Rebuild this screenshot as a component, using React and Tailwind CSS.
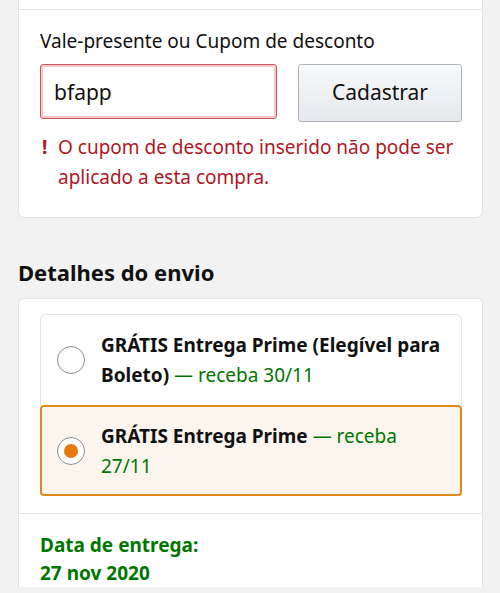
export default function App() {
  return (
    <div
      className="h-[593px] overflow-hidden bg-[#f2f2f2] pl-[18px] pr-[17px] text-[#111]"
      style={{ fontFamily: '"Noto Sans", "Open Sans", sans-serif' }}
    >
      {/* cupom card */}
      <div className="rounded-b-[6px] border-x border-b border-[#e3e3e3] bg-white">
        <div className="h-[10px] border-b border-[#e7e7e7]" />
        <div className="pb-[25px] pl-[21px] pr-[20px] pt-[16px]">
          <div className="text-[19px] leading-[30px]">Vale-presente ou Cupom de desconto</div>
          <div className="mt-[8px] flex items-start">
            <div className="flex h-[55px] w-[237px] items-center rounded-[3px] border border-[#c45a5a] bg-white px-[13px] pt-[3px] shadow-[0_0_0_2px_#f8c8c8_inset]">
              <span className="text-[21px]">bfapp</span>
            </div>
            <button className="ml-auto flex h-[58px] w-[164px] items-center justify-center rounded-[3px] border border-[#adb1b8] bg-gradient-to-b from-[#f7f8fa] to-[#e7e9ec] text-[21px] text-[#111] shadow-[0_1px_0_rgba(255,255,255,0.6)_inset]">
              Cadastrar
            </button>
          </div>
          <div className="mt-[10px] flex text-[19px] leading-[30px] text-[#b0161e]">
            <span className="w-[18px] shrink-0 pl-[2px] font-bold">!</span>
            <span>O cupom de desconto inserido não pode ser aplicado a esta compra.</span>
          </div>
        </div>
      </div>

      <h2 className="mt-[39px] text-[22px] font-bold leading-[30px]">Detalhes do envio</h2>

      {/* envio card */}
      <div className="mt-[11px] rounded-t-[6px] border border-b-0 border-[#e3e3e3] bg-white">
        <div className="pb-[17px] pl-[21px] pr-[20px] pt-[15px]">
          <label className="flex items-center rounded-t-[6px] border border-b-0 border-[#e3e3e3] pb-[15px] pl-[16px] pr-[12px] pt-[15px]">
            <span className="h-[28px] w-[28px] shrink-0 rounded-full border border-[#8d8d8d] bg-white" />
            <span className="ml-[16px] text-[19px] font-bold leading-[30px]">
              GRÁTIS Entrega Prime (Elegível para Boleto){' '}
              <span className="font-normal text-[#007600]">— receba 30/11</span>
            </span>
          </label>
          <label className="flex items-center rounded-[4px] border-2 border-[#e0891f] bg-[#fcf5ee] pb-[13px] pl-[15px] pr-[12px] pt-[14px]">
            <span className="flex h-[28px] w-[28px] shrink-0 items-center justify-center rounded-full border border-[#8d8d8d] bg-white">
              <span className="h-[14px] w-[14px] rounded-full bg-[#e47911]" />
            </span>
            <span className="ml-[16px] text-[19px] font-bold leading-[30px]">
              GRÁTIS Entrega Prime{' '}
              <span className="font-normal text-[#007600]">— receba 27/11</span>
            </span>
          </label>
        </div>
        <div className="border-t border-[#e7e7e7] px-[21px] pt-[17px] text-[19px] font-bold leading-[28px] text-[#007600]">
          <div>Data de entrega:</div>
          <div>27 nov 2020</div>
        </div>
      </div>
    </div>
  );
}
